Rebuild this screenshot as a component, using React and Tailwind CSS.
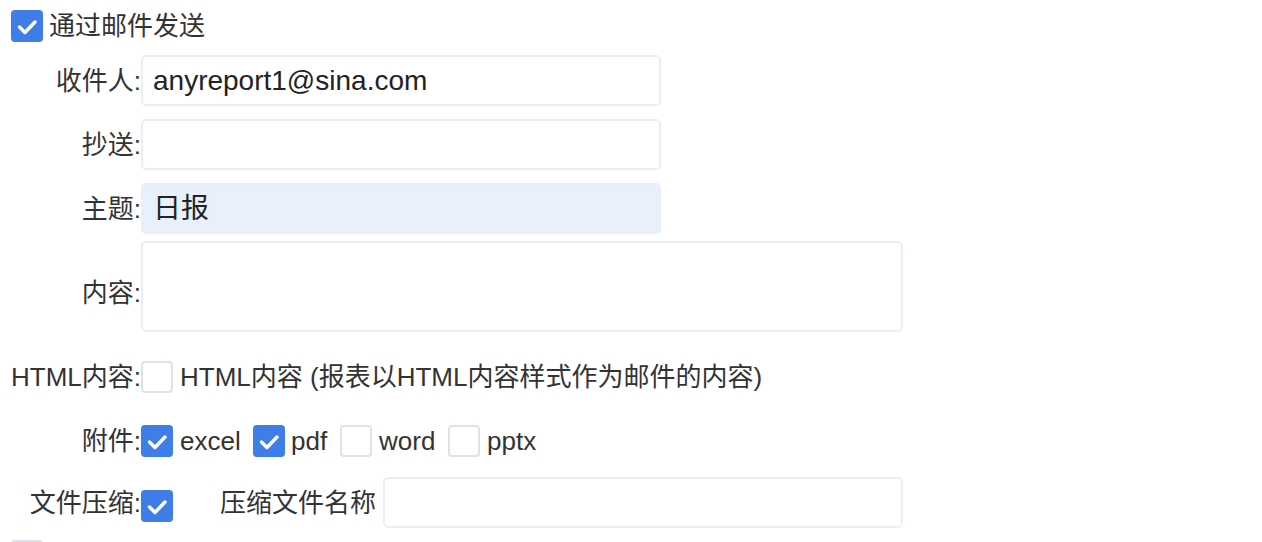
import React from "react";

const FONT = { fontFamily: '"Liberation Sans", "Noto Sans CJK SC", sans-serif' };

function Box({ checked }) {
  return checked ? (
    <span className="flex h-[32px] w-[32px] shrink-0 items-center justify-center rounded-[4px] bg-[#3f7de8]">
      <svg width="32" height="32" viewBox="0 0 32 32" fill="none">
        <path d="M8.5 17l5.5 5.5 10-10.5" stroke="#fff" strokeWidth="3.5" strokeLinecap="round" strokeLinejoin="round" />
      </svg>
    </span>
  ) : (
    <span className="block h-[32px] w-[32px] shrink-0 rounded-[4px] border-2 border-[#dfe2e8] bg-white" />
  );
}

function Label({ children, className = "" }) {
  return (
    <div className={"w-[130px] shrink-0 text-right text-[26px] leading-none text-[#333] " + className}>{children}</div>
  );
}

function Input({ value = "", filled = false, w = "w-[520px]" }) {
  return (
    <div
      className={
        "flex h-[51px] items-center rounded-[5px] border-2 px-[10px] text-[28px] leading-none text-[#222] " +
        w +
        (filled ? " border-[#e8effb] bg-[#e8f0fc]" : " border-[#eceef2] bg-white")
      }
    >
      {value}
    </div>
  );
}

export default function App() {
  return (
    <div className="min-h-[542px] overflow-hidden bg-white pl-[11px] pt-[10px]" style={FONT}>
      <div className="flex h-[32px] items-center gap-[6px]">
        <Box checked />
        <span className="text-[26px] leading-none text-[#333]">通过邮件发送</span>
      </div>

      <div className="mt-[13px] flex items-center">
        <Label>收件人:</Label>
        <Input value="anyreport1@sina.com" />
      </div>
      <div className="mt-[13px] flex items-center">
        <Label>抄送:</Label>
        <Input />
      </div>
      <div className="mt-[13px] flex items-center">
        <Label>主题:</Label>
        <Input value="日报" filled />
      </div>
      <div className="mt-[7px] flex items-center">
        <Label className="pt-[13px]">内容:</Label>
        <div className="h-[91px] w-[762px] rounded-[5px] border-2 border-[#eceef2] bg-white" />
      </div>

      <div className="mt-[29px] flex h-[32px] items-center">
        <Label>HTML内容:</Label>
        <Box />
        <span className="ml-[7px] text-[26px] leading-none text-[#333]">HTML内容 (报表以HTML内容样式作为邮件的内容)</span>
      </div>

      <div className="mt-[32px] flex h-[32px] items-center">
        <Label>附件:</Label>
        <Box checked />
        <span className="ml-[7px] w-[73px] text-[26px] leading-none text-[#333]">excel</span>
        <Box checked />
        <span className="ml-[6px] w-[49px] text-[26px] leading-none text-[#333]">pdf</span>
        <Box />
        <span className="ml-[7px] w-[69px] text-[26px] leading-none text-[#333]">word</span>
        <Box />
        <span className="ml-[7px] text-[26px] leading-none text-[#333]">pptx</span>
      </div>

      <div className="mt-[20px] flex h-[51px] items-center">
        <Label>文件压缩:</Label>
        <div className="mt-[6px]">
          <Box checked />
        </div>
        <span className="ml-[47px] mr-[7px] text-[26px] leading-none text-[#333]">压缩文件名称</span>
        <Input />
      </div>

      <div className="mt-[12px] flex h-[32px] items-center gap-[6px]">
        <Box />
        <span className="text-[26px] leading-none text-[#333]">附件加密</span>
      </div>
    </div>
  );
}
